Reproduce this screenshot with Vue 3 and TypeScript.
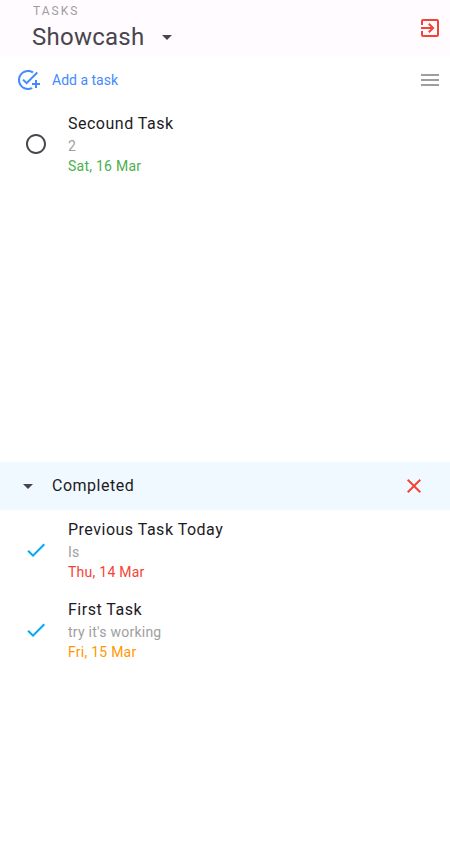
<script setup lang="ts">
interface Task {
  title: string
  note: string
  due: string
  tone: 'future' | 'past' | 'today'
}

const pending: Task[] = [
  { title: 'Secound Task', note: '2', due: 'Sat, 16 Mar', tone: 'future' },
]

const completed: Task[] = [
  { title: 'Previous Task Today', note: 'Is', due: 'Thu, 14 Mar', tone: 'past' },
  { title: 'First Task', note: "try it's working", due: 'Fri, 15 Mar', tone: 'today' },
]
</script>

<template>
  <main class="screen">
    <header class="app-bar">
      <div class="heading">
        <span class="overline">TASKS</span>
        <button class="list-picker" type="button">
          <span class="list-name">Showcash</span>
          <svg class="icon" viewBox="0 0 24 24"><path d="M7 10l5 5 5-5z" /></svg>
        </button>
      </div>
      <button class="exit" type="button" aria-label="Sign out">
        <svg class="icon" viewBox="0 0 24 24">
          <path d="M10.09 15.59L11.5 17l5-5-5-5-1.41 1.41L12.67 11H3v2h9.67l-2.58 2.59zM19 3H5c-1.11 0-2 .9-2 2v4h2V5h14v14H5v-4H3v4c0 1.1.89 2 2 2h14c1.1 0 2-.9 2-2V5c0-1.1-.9-2-2-2z" />
        </svg>
      </button>
    </header>

    <div class="actions">
      <button class="add" type="button">
        <svg class="icon" viewBox="0 0 24 24">
          <path d="M22 5.18L10.59 16.6l-4.24-4.24 1.41-1.41 2.83 2.83 10-10L22 5.18zM12 20c-4.41 0-8-3.59-8-8s3.59-8 8-8c1.57 0 3.04.46 4.28 1.25l1.45-1.45C16.1 2.67 14.13 2 12 2 6.48 2 2 6.48 2 12s4.48 10 10 10c1.73 0 3.36-.44 4.78-1.22l-1.5-1.5c-1 .46-2.11.72-3.28.72zm7-5h-3v2h3v3h2v-3h3v-2h-3v-3h-2v3z" />
        </svg>
        <span>Add a task</span>
      </button>
      <button class="menu" type="button" aria-label="Menu">
        <svg class="icon" viewBox="0 0 24 24"><path d="M3 18h18v-2H3v2zm0-5h18v-2H3v2zm0-7v2h18V6H3z" /></svg>
      </button>
    </div>

    <ul class="tasks pending">
      <li v-for="task in pending" :key="task.title" class="task">
        <svg class="icon open" viewBox="0 0 24 24">
          <path d="M12 2C6.48 2 2 6.48 2 12s4.48 10 10 10 10-4.48 10-10S17.52 2 12 2zm0 18c-4.42 0-8-3.58-8-8s3.58-8 8-8 8 3.58 8 8-3.58 8-8 8z" />
        </svg>
        <div class="details">
          <span class="title">{{ task.title }}</span>
          <span class="note">{{ task.note }}</span>
          <span class="due" :class="task.tone">{{ task.due }}</span>
        </div>
      </li>
    </ul>

    <section>
      <div class="section-bar">
        <svg class="icon" viewBox="0 0 24 24"><path d="M7 10l5 5 5-5z" /></svg>
        <span class="section-title">Completed</span>
        <button class="clear" type="button" aria-label="Clear completed">
          <svg class="icon" viewBox="0 0 24 24">
            <path d="M19 6.41L17.59 5 12 10.59 6.41 5 5 6.41 10.59 12 5 17.59 6.41 19 12 13.41 17.59 19 19 17.59 13.41 12z" />
          </svg>
        </button>
      </div>
      <ul class="tasks">
        <li v-for="task in completed" :key="task.title" class="task">
          <svg class="icon done" viewBox="0 0 24 24"><path d="M9 16.17L4.83 12l-1.42 1.41L9 19 21 7l-1.41-1.41z" /></svg>
          <div class="details">
            <span class="title">{{ task.title }}</span>
            <span class="note">{{ task.note }}</span>
            <span class="due" :class="task.tone">{{ task.due }}</span>
          </div>
        </li>
      </ul>
    </section>
  </main>
</template>

<style>
body {
  background: #fff;
}
</style>

<style scoped>
.screen {
  box-sizing: border-box;
  min-height: 868px;
  font-family: Roboto, sans-serif;
  color: #1c1b1f;
}

button {
  display: flex;
  align-items: center;
  padding: 0;
  border: 0;
  background: none;
  color: inherit;
  font: inherit;
}

.icon {
  display: block;
  flex: none;
  width: 24px;
  height: 24px;
  fill: currentColor;
}

.app-bar {
  display: flex;
  align-items: center;
  justify-content: space-between;
  box-sizing: border-box;
  height: 56px;
  padding: 0 8px 0 32px;
  background: #fffbfe;
}

.heading {
  display: flex;
  flex-direction: column;
  box-sizing: border-box;
  height: 56px;
  padding-top: 1px;
}

.overline {
  height: 16px;
  padding: 2px 0 0 1px;
  font-size: 12px;
  line-height: 16px;
  letter-spacing: 2px;
  color: #9e9e9e;
}

.list-picker {
  height: 36px;
  gap: 10.5px;
  color: #49454f;
}

.list-name {
  font-size: 24px;
  line-height: 32px;
  letter-spacing: 0.25px;
}

.exit {
  color: #f44336;
}

.actions {
  display: flex;
  align-items: center;
  justify-content: space-between;
  height: 48px;
  padding: 0 8px 0 16px;
}

.add {
  gap: 12px;
  font-size: 14px;
  line-height: 20px;
  color: #448aff;
}

.menu {
  color: #9e9e9e;
}

.tasks {
  margin: 0;
  padding: 0;
  list-style: none;
}

.pending {
  height: 358px;
}

.task {
  display: flex;
  align-items: center;
  gap: 20px;
  box-sizing: border-box;
  height: 80px;
  padding: 0 24px;
}

.open {
  color: #49454f;
}

.done {
  color: #03a9f4;
}

.details {
  display: flex;
  flex-direction: column;
  font-size: 14px;
  line-height: 20px;
  letter-spacing: 0.25px;
}

.title {
  font-size: 16px;
  line-height: 24px;
  letter-spacing: 0.5px;
}

.note {
  color: #9e9e9e;
}

.future {
  color: #4caf50;
}

.past {
  color: #f44336;
}

.today {
  color: #ff9800;
}

.section-bar {
  display: flex;
  align-items: center;
  gap: 12px;
  height: 48px;
  padding: 0 24px 0 16px;
  background: #f0f9ff;
}

.section-bar > .icon {
  color: #49454f;
}

.section-title {
  flex: 1;
  font-size: 16px;
  line-height: 24px;
  letter-spacing: 0.5px;
}

.clear {
  color: #f44336;
}
</style>
